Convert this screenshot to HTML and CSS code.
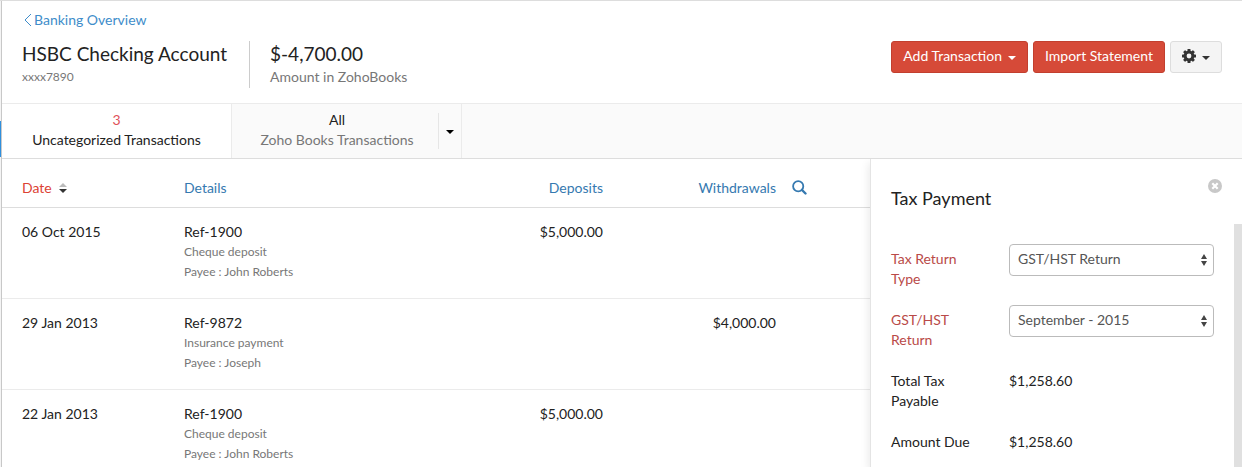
FILE: index.html
```html
<!DOCTYPE html>
<html lang="en">
<head>
<meta charset="utf-8">
<title>HSBC Checking Account</title>
<link rel="stylesheet" href="styles.css">
</head>
<body>
<div class="app">
  <div class="rail"><div class="rail-active"></div></div>
  <main class="page">
    <header class="header">
      <a class="back" href="#"><svg width="8" height="14" viewBox="0 0 8 14"><path d="M7 1 1 7l6 6" fill="none" stroke="currentColor"/></svg><span>Banking Overview</span></a>
      <div class="header-row">
        <div class="account">
          <h1 class="headline">HSBC Checking Account</h1>
          <div class="account-number">xxxx7890</div>
        </div>
        <div class="balance">
          <div class="headline">$-4,700.00</div>
          <div class="balance-label">Amount in ZohoBooks</div>
        </div>
        <div class="actions">
          <button class="btn btn-primary" type="button">Add Transaction<span class="caret"></span></button>
          <button class="btn btn-primary" type="button">Import Statement</button>
          <button class="btn btn-plain" type="button" aria-label="Settings">
            <svg width="14" height="14" viewBox="0 0 14 14"><g fill="currentColor"><rect x="5.5" width="3" height="14" rx=".6"/><rect x="5.5" width="3" height="14" rx=".6" transform="rotate(45 7 7)"/><rect x="5.5" width="3" height="14" rx=".6" transform="rotate(90 7 7)"/><rect x="5.5" width="3" height="14" rx=".6" transform="rotate(135 7 7)"/><circle cx="7" cy="7" r="5.4"/></g><circle cx="7" cy="7" r="2.4" fill="#f4f4f4"/></svg><span class="caret"></span>
          </button>
        </div>
      </div>
    </header>

    <nav class="tabs">
      <a class="tab tab-active" href="#"><span class="tab-count">3</span><span>Uncategorized Transactions</span></a>
      <div class="tab-group">
        <a class="tab" href="#"><span class="tab-all">All</span><span>Zoho Books Transactions</span></a>
        <button class="tab-menu" type="button" aria-label="More transaction views"><span class="caret"></span></button>
      </div>
    </nav>

    <div class="content">
      <section class="list">
        <table class="transactions">
          <colgroup><col class="col-date"><col><col class="col-deposit"><col class="col-withdrawal"><col class="col-search"></colgroup>
          <thead>
            <tr>
              <th><a class="sorted" href="#">Date<svg class="sort" width="8" height="10" viewBox="0 0 8 10"><path d="M0 4 4 0l4 4z" fill="#bbb"/><path d="M0 6h8l-4 4z" fill="#333"/></svg></a></th>
              <th><a href="#">Details</a></th>
              <th class="amount"><a href="#">Deposits</a></th>
              <th class="amount"><a href="#">Withdrawals</a></th>
              <th><button class="search" type="button" aria-label="Search"><svg width="15" height="15" viewBox="0 0 15 15" fill="none" stroke="currentColor"><circle cx="6.2" cy="6.2" r="5.1" stroke-width="1.8"/><path d="m10 10 3.5 3.5" stroke-width="2.4" stroke-linecap="round"/></svg></button></th>
            </tr>
          </thead>
          <tbody>
            <tr><td>06 Oct 2015</td><td>Ref-1900<div class="note">Cheque deposit</div><div class="note">Payee : John Roberts</div></td><td class="amount">$5,000.00</td><td></td><td></td></tr>
            <tr><td>29 Jan 2013</td><td>Ref-9872<div class="note">Insurance payment</div><div class="note">Payee : Joseph</div></td><td></td><td class="amount">$4,000.00</td><td></td></tr>
            <tr><td>22 Jan 2013</td><td>Ref-1900<div class="note">Cheque deposit</div><div class="note">Payee : John Roberts</div></td><td class="amount">$5,000.00</td><td></td><td></td></tr>
          </tbody>
        </table>
      </section>

      <aside class="panel">
        <div class="panel-head">
          <h2 class="panel-title">Tax Payment</h2>
          <button class="close" type="button" aria-label="Close"><svg width="14" height="14" viewBox="0 0 14 14"><circle cx="7" cy="7" r="7" fill="#c8c8c8"/><path d="m4.3 4.3 5.4 5.4m0-5.4L4.3 9.7" stroke="#fff" stroke-width="2.2"/></svg></button>
        </div>
        <div class="panel-body">
          <form class="form">
            <div class="field">
              <label class="required" for="return-type">Tax Return Type</label>
              <div class="select-wrap">
                <select id="return-type"><option>GST/HST Return</option></select>
                <svg class="arrows" width="8" height="12" viewBox="0 0 8 12"><path d="M1 5 4 0l3 5zM1 7h6l-3 5z" fill="#444"/></svg>
              </div>
            </div>
            <div class="field">
              <label class="required" for="return-period">GST/HST Return</label>
              <div class="select-wrap">
                <select id="return-period"><option>September - 2015</option></select>
                <svg class="arrows" width="8" height="12" viewBox="0 0 8 12"><path d="M1 5 4 0l3 5zM1 7h6l-3 5z" fill="#444"/></svg>
              </div>
            </div>
            <div class="field"><div class="name">Total Tax Payable</div><div class="value">$1,258.60</div></div>
            <div class="field"><div class="name">Amount Due</div><div class="value">$1,258.60</div></div>
          </form>
          <div class="scrollbar"></div>
        </div>
      </aside>
    </div>
  </main>
</div>
</body>
</html>
```
FILE: styles.css
```css
* { box-sizing: border-box; }

body {
  margin: 0;
  overflow: hidden;
  background: #fff;
  color: #222;
  font: 14px/20px Lato, "Open Sans", sans-serif;
}

a { color: #3579b0; text-decoration: none; }
button, select { font: inherit; color: inherit; cursor: pointer; }
svg { display: block; flex: none; }
h1, h2 { margin: 0; font-weight: 400; }

.app { display: flex; height: 100vh; border-top: 1px solid #ddd; }
.rail { width: 1px; padding-top: 120px; background: #f4f4f4; }
.rail-active { height: 36px; background: #2f8fdd; }

.page {
  flex: 1;
  min-width: 0;
  display: flex;
  flex-direction: column;
  border-left: 1px solid #c8c8c8;
}

.header { padding: 9px 20px 15px; border-bottom: 1px solid #ebebeb; }
.back { display: inline-flex; align-items: center; gap: 2px; padding-left: 2px; color: #408dca; }
.header-row { display: flex; align-items: flex-start; padding-top: 9px; }
.account { padding: 0 22px 1px 0; border-right: 1px solid #ccc; }
.balance { padding-left: 20px; }
.headline { font-size: 19px; line-height: 26px; }
.account-number { font-size: 12px; color: #777; }
.balance-label { color: #777; }
.actions { display: flex; gap: 5px; margin-left: auto; }

.btn {
  display: flex;
  align-items: center;
  gap: 6px;
  height: 32px;
  padding: 0 11px 2px;
  border: 1px solid;
  border-radius: 3px;
  white-space: nowrap;
}
.btn-primary { background: #d64a38; border-color: #c23f2e; color: #fff; }
.btn-plain { background: #f4f4f4; border-color: #ddd; color: #333; }
.caret { border: 4px solid transparent; border-top-color: currentColor; border-bottom: 0; margin-top: 4px; }

.tabs { display: flex; height: 55px; flex: none; background: #fafafa; border-bottom: 1px solid #ddd; }
.tab { display: flex; flex-direction: column; align-items: center; padding: 6px 22px; color: #777; white-space: nowrap; }
.tab-active { min-width: 230px; background: #fff; border-right: 1px solid #ebebeb; color: #222; }
.tab-count { color: #e0525a; }
.tab-all { color: #222; }
.tab-group { display: flex; align-items: center; min-width: 230px; border-right: 1px solid #ebebeb; }
.tab-group .tab { flex: 1; align-self: flex-start; padding-left: 26px; }
.tab-menu { height: 36px; padding: 0 7px; background: none; border: 0; border-left: 1px solid #e6e6e6; color: #000; }
.tab-menu .caret { display: block; margin-top: 2px; }

.content { flex: 1; display: flex; min-height: 0; }
.list { flex: 1; min-width: 0; overflow: hidden; }

.transactions { width: 100%; table-layout: fixed; border-collapse: collapse; }
.transactions th, .transactions td { padding: 0; text-align: left; vertical-align: top; font-weight: 400; }
.transactions th { height: 48px; padding-top: 19px; border-bottom: 1px solid #ddd; }
.transactions td { height: 91px; padding-top: 14px; border-bottom: 1px solid #ebebeb; }
.transactions th:first-child, .transactions td:first-child { padding-left: 20px; }
.transactions .amount { text-align: right; }
.col-date { width: 182px; }
.col-deposit { width: 160px; }
.col-withdrawal { width: 173px; }
.col-search { width: 94px; }
.transactions .sorted { display: inline-flex; align-items: center; gap: 7px; color: #dc4234; }
.note { font-size: 12px; color: #777; }
.search { display: block; padding: 2px 16px; border: 0; background: none; color: #3579b0; }

.panel {
  width: 372px;
  flex: none;
  display: flex;
  flex-direction: column;
  background: #fff;
  border-left: 1px solid #e4e4e4;
  box-shadow: -2px 4px 8px rgba(0, 0, 0, .08);
  clip-path: inset(0 0 0 -12px);
}
.panel-head { display: flex; justify-content: space-between; align-items: flex-start; height: 65px; padding: 20px; }
.panel-title { padding-top: 7px; font-size: 18px; line-height: 24px; }
.close { padding: 0; border: 0; background: none; }
.panel-body { flex: 1; display: flex; min-height: 0; }
.form { flex: 1; display: flex; flex-direction: column; gap: 21px; padding: 20px; overflow: hidden; }
.scrollbar { width: 8px; background: #e0e0e0; }
.field { display: grid; grid-template-columns: 88px 1fr; column-gap: 30px; min-height: 40px; flex: none; }
.field > label, .name, .value { padding-top: 5px; margin-bottom: -5px; }
.required { color: #b94a48; }
.select-wrap { position: relative; height: 32px; }
.select-wrap select {
  appearance: none;
  width: 100%;
  height: 32px;
  padding: 0 24px 2px 8px;
  border: 1px solid #bbb;
  border-radius: 4px;
  background: #fff;
  color: #555;
}
.arrows { position: absolute; right: 6px; top: 10px; pointer-events: none; }
```
